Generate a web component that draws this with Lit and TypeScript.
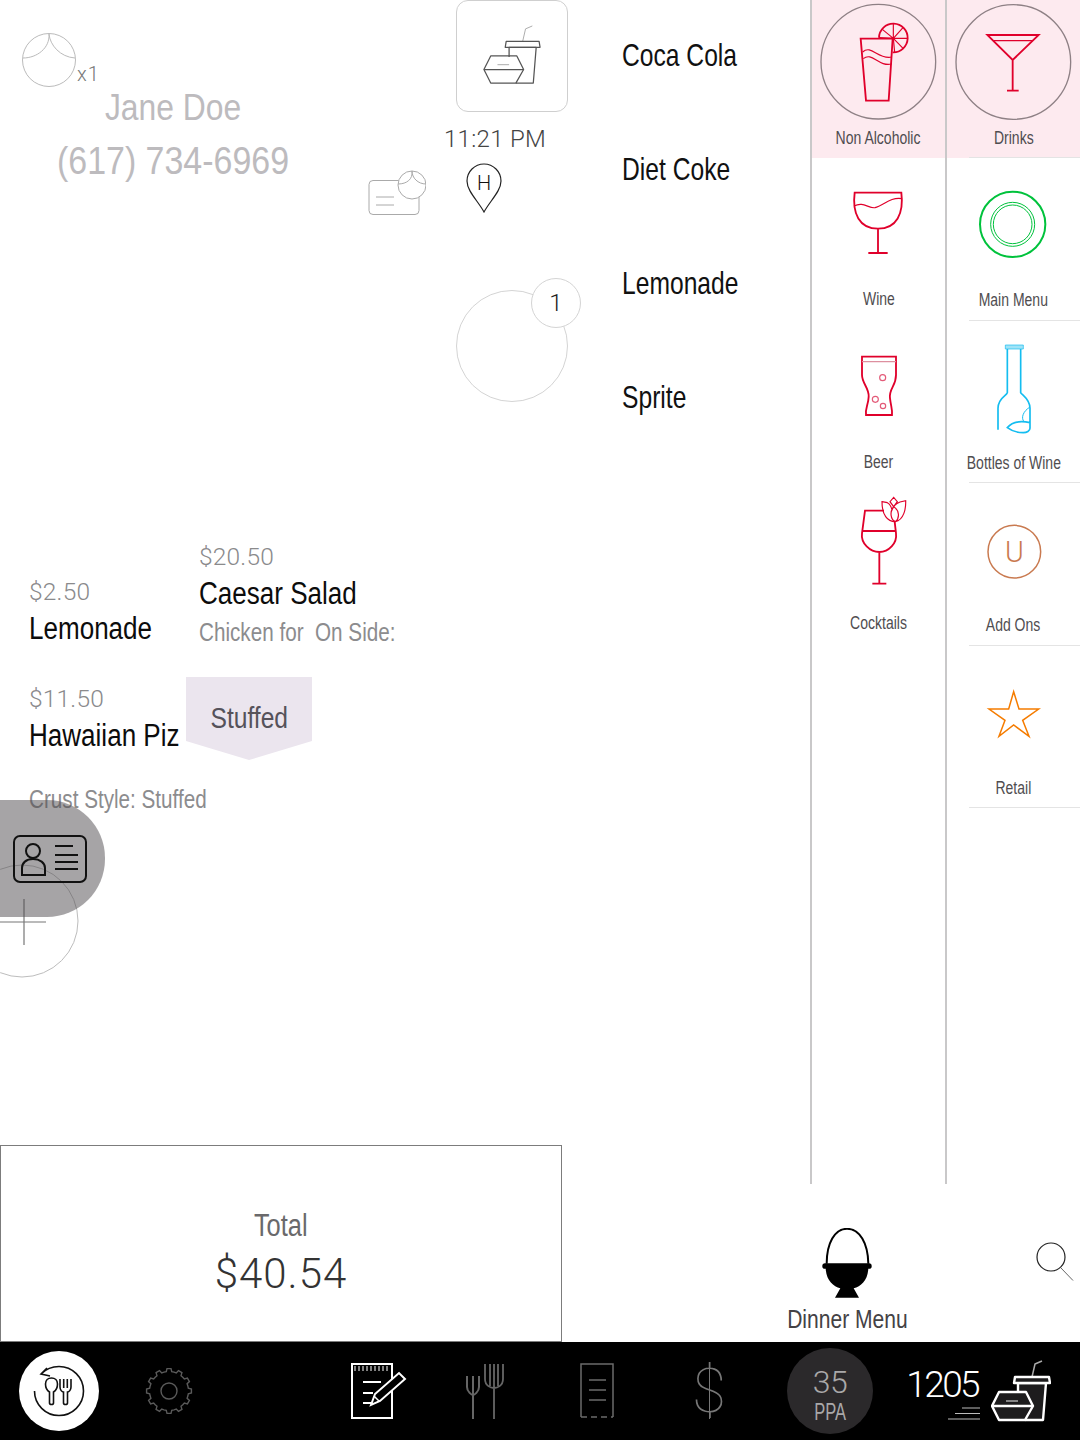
import { LitElement, html, css, svg } from "lit";
import { customElement } from "lit/decorators.js";

const gearPath = () => {
  const cx = 24, cy = 24, teeth = 12;
  let d = "";
  for (let i = 0; i < teeth; i++) {
    const a = (i / teeth) * Math.PI * 2;
    const s = (Math.PI * 2) / teeth;
    const pts: [number, number][] = [
      [19.5, a - s * 0.5], [19.5, a - s * 0.27], [22.5, a - s * 0.17], [22.5, a + s * 0.17], [19.5, a + s * 0.27],
    ];
    pts.forEach(([r, t], j) => {
      d += `${i === 0 && j === 0 ? "M" : "L"}${(cx + r * Math.cos(t)).toFixed(2)} ${(cy + r * Math.sin(t)).toFixed(2)}`;
    });
  }
  return d + "Z";
};

const takeout = (cls: string) => html`<svg class=${cls} viewBox="0 0 60 62" fill="none" stroke-linejoin="round">
  <path class="straw" d="M41 17 L44 4 L51 1"/>
  <path class="body" d="M27 33 V23 H55 L52 60 H34"/>
  <path class="body" d="M24 17 H58 L59 23 H23 Z"/>
  <path class="body" d="M1 46 L8 32 H35 L42 46 L34 60 H8 Z"/>
  <path class="body" d="M1 46 H42"/>
  <path class="straw" d="M15 41 H27"/>
</svg>`;

const icons: Record<string, unknown> = {
  alcohol: svg`<circle cx="205" cy="185" r="172" class="ring"/>
    <path class="r" d="M207 113 A43 43 0 1 1 248 157"/>
    <path class="r2" d="M250 115 L207 113 M250 115 L217 88 M250 115 L250 72 M250 115 L279 83 M250 115 L293 115 M250 115 L280 146 M250 115 L254 157"/>
    <path class="r" d="M152 116 H248 L236 302 H168 Z"/>
    <path class="r2" d="M158 156 C184 132 204 180 245 171 M160 176 C186 154 206 202 245 192"/>`,
  drinks: svg`<circle cx="610" cy="186" r="172" class="ring"/>
    <path class="r" d="M532 105 H686 L608 180 Z M608 180 V272 M591 272 H626"/>
    <path class="r2" d="M552 122 H668"/>`,
  wine: svg`<path class="r" d="M134 578 H274 C282 640 260 686 204 686 C148 686 126 640 134 578 Z M204 686 V759 M175 759 H233"/>
    <path class="r2" d="M132 618 C160 603 175 626 195 623 C220 618 240 590 276 596"/>`,
  plate: svg`<g fill="none" stroke="#00c23c"><circle cx="608" cy="673" r="98" stroke-width="6"/>
    <circle cx="608" cy="673" r="66" stroke-width="3"/><circle cx="608" cy="673" r="58" stroke-width="3"/></g>`,
  beer: svg`<path class="r" d="M156 110 H258 V165 C258 200 236 205 240 235 C243 260 248 270 246 285 H168 C165 265 175 255 176 230 C178 205 156 190 156 165 Z"/>
    <path d="M156 125 H258" stroke="#dd8f9f" stroke-width="3.5" fill="none"/>
    <g fill="none" stroke="#e35a78" stroke-width="3.5"><circle cx="218" cy="173" r="9"/><circle cx="196" cy="238" r="9"/><circle cx="219" cy="258" r="8"/></g>`,
  bottle: svg`<g fill="none" stroke="#14bdf0" stroke-width="5"><path d="M586 72 H640 V84 H586 Z" fill="#9fe3f7" stroke-width="2"/>
    <path d="M592 84 V215 C590 225 564 230 564 262 V326"/>
    <path d="M632 84 V215 C640 225 660 235 660 262 V322 C660 330 650 335 640 335 C620 335 605 330 592 320 C605 305 630 298 660 305"/>
    <path stroke-width="3" d="M660 258 C640 270 632 290 642 302"/></g>`,
  cocktail: svg`<path class="r" d="M222 572 H165 L156 640 C152 670 180 696 208 696 C236 696 262 670 258 640 L254 605 M156 633 H258 M208 696 V791 M187 791 H229"/>
    <path class="r2" d="M216 545 L232 548 C240 552 244 560 246 570 C252 556 256 552 270 546 L287 542 C288 565 282 600 256 605 C232 605 216 585 216 545 Z M251 532 L262 545 L251 560 L240 545 Z M251 560 C238 575 242 600 256 605 C270 595 268 570 251 560"/>`,
  addon: svg`<circle cx="613" cy="692" r="79" fill="none" stroke="#c97a50" stroke-width="4.5"/>
    <text x="613" y="722" text-anchor="middle" class="u">U</text>`,
  star: svg`<path fill="none" stroke="#f57c00" stroke-width="4.5" d="M611 152 L627 204 H686 L638 238 L657 286 L611 252 L567 286 L585 238 L537 204 H596 Z"/>`,
};

type Cell = { label: string; icon: string; y0: number; svgH: number; h: number; };
const col1: Cell[] = [
  { label: "Non Alcoholic", icon: "alcohol", y0: 0, svgH: 128, h: 158 },
  { label: "Wine", icon: "wine", y0: 474, svgH: 131, h: 162 },
  { label: "Beer", icon: "beer", y0: 0, svgH: 131.5, h: 162 },
  { label: "Cocktails", icon: "cocktail", y0: 486, svgH: 131, h: 162 },
];
const col2: Cell[] = [
  { label: "Drinks", icon: "drinks", y0: 0, svgH: 128, h: 158 },
  { label: "Main Menu", icon: "plate", y0: 474, svgH: 132, h: 162.5 },
  { label: "Bottles of Wine", icon: "bottle", y0: 0, svgH: 132.5, h: 162 },
  { label: "Add Ons", icon: "addon", y0: 486, svgH: 132.5, h: 163 },
  { label: "Retail", icon: "star", y0: 15, svgH: 132.5, h: 162 },
];

@customElement("app-root")
export class AppRoot extends LitElement {
  static styles = css`
    :host { display: block; width: 1080px; height: 1440px; background: #fff; overflow: hidden;
      font-family: "Liberation Sans", Arial, sans-serif; color: #111; }
    .screen { display: grid; width: 1080px; height: 1440px;
      grid-template-columns: 562px 248px 135px 135px; grid-template-rows: 1145px 39px 158px 98px; }

    .left { grid-column: 1 / 3; grid-row: 1; position: relative; overflow: hidden; }
    .top { display: flex; height: 532px; }
    .customer { width: 456px; padding-top: 33px; box-sizing: border-box; display: flex; flex-direction: column; }
    .avatarRow { display: flex; align-items: flex-end; padding-left: 22px; height: 54px; }
    .avatar { width: 54px; height: 54px; display: block; }
    .x1 { font: 300 20px/20px Roboto, sans-serif; color: #777; letter-spacing: 1px; margin: 0 0 3px 1px; }
    .name, .phone { width: 346px; text-align: center; color: #bdbbbe; line-height: 44px; }
    .name { margin-top: -1px; font-size: 37px; transform: scaleX(.86); }
    .phone { margin-top: 9px; font-size: 39px; transform: scaleX(.87); }
    .card { width: 60px; height: 46px; margin: -13px 0 0 366px; display: block; }

    .center { width: 112px; }
    .box { width: 112px; height: 112px; box-sizing: border-box; border: 1.5px solid #cfcfcf; border-radius: 12px;
      display: flex; align-items: flex-start; padding: 24px 0 0 25px; }
    .smallTake { width: 60px; height: 60px; display: block; }
    .smallTake .body { stroke: #555; stroke-width: 1.3; }
    .smallTake .straw { stroke: #aaa; stroke-width: 1; }
    .time { font: 300 24px/28px Roboto, sans-serif; color: #444; white-space: nowrap; margin: 13px 0 0 -12px; letter-spacing: .3px; }
    .pin { position: relative; width: 36px; height: 50px; margin: 10px 0 0 10px; font: 300 20px/40px Roboto, sans-serif; text-align: center; color: #111; }
    .pin svg { position: absolute; inset: 0; width: 36px; height: 50px; }
    .seat { position: relative; width: 112px; height: 112px; margin-top: 77px; border: 1px solid #d4d4d4; border-radius: 50%; box-sizing: border-box; }
    .badge { position: absolute; left: 74px; top: -13px; width: 50px; height: 50px; box-sizing: border-box; border: 1px solid #d4d4d4; border-radius: 50%; background: #fff;
      display: flex; align-items: center; justify-content: center; font: 300 24px Roboto, sans-serif; color: #222; }

    .list { margin: -2px 0 0 54px; font-size: 32px; color: #111; }
    .list div { height: 114px; line-height: 114px; transform: scaleX(.77); transform-origin: left center; white-space: nowrap; }

    .tickets { display: flex; padding-left: 29px; }
    .price { font: 300 24.5px/30px Roboto, sans-serif; color: #8a8a8c; letter-spacing: 0.2px; }
    .item { font-size: 31px; line-height: 40px; margin-top: 2px; color: #0c0c0c; white-space: nowrap; transform: scaleX(.84); transform-origin: left center; }
    .mod { font-size: 26px; line-height: 32px; color: #8c8c8e; white-space: pre; transform: scaleX(.795); transform-origin: left center; }
    .t1 { width: 170px; margin-top: 45px; }
    .t3 { padding: 0 0 0 29px; }
    .t2 { margin-top: 10px; }
    .t2 .mod { margin-top: 2px; }
    .t3 .price { margin-top: 35px; }
    .t3 .mod { margin-top: 27px; }

    .popup { position: absolute; left: 186px; top: 677px; width: 126px; height: 83px; background: #ebe5ee; color: #55525a;
      clip-path: polygon(0 0, 100% 0, 100% 77%, 50% 100%, 0 77%); font-size: 30px; line-height: 82px; display: flex; justify-content: center; }
    .popup span { transform: scaleX(.82); white-space: nowrap; }
    .pill { position: absolute; left: 0; top: 800px; width: 105px; height: 117px; background: rgba(77, 74, 77, .5); border-radius: 0 58px 58px 0;
      display: flex; align-items: center; padding-left: 13px; box-sizing: border-box; }
    .pill svg { width: 74px; height: 48px; display: block; margin-top: 1px; }
    .fab { position: absolute; left: 0; top: 862px; width: 82px; height: 118px; display: block; }

    .menu { grid-row: 1 / 3; border-left: 2px solid #c9c8c9; box-sizing: border-box; overflow: hidden; }
    .menu.m1 { grid-column: 3; }
    .menu.m2 { grid-column: 4; }
    .cell { display: flex; flex-direction: column; align-items: center; box-sizing: border-box; position: relative; }
    .cell.on { background: #fdeaef; }
    .cell svg { display: block; width: 134px; flex: none; }
    .cell .r { fill: none; stroke: #e0002b; stroke-width: 5.5; }
    .cell .r2 { fill: none; stroke: #e0002b; stroke-width: 3.5; }
    .cell .ring { fill: none; stroke: #8e8085; stroke-width: 4; }
    .cell .u { font: 300 86px Roboto, sans-serif; fill: #c97a50; }
    .label { font-size: 17.5px; line-height: 20px; color: #4f4d50; white-space: nowrap; transform: scaleX(.8); }
    .m2 .cell::after { content: ""; position: absolute; right: 0; bottom: 0; width: 111px; height: 1px; background: #e4e4e4; }

    .total { grid-column: 1; grid-row: 2 / 4; border: 1px solid #7c7c7c; box-sizing: border-box; display: flex; flex-direction: column; align-items: center; padding-top: 61px; }
    .total .lab { font-size: 31px; line-height: 38px; color: #6a696b; transform: scaleX(.82); }
    .total .amt { font: 300 42px/54px Roboto, sans-serif; color: #333; letter-spacing: 1px; margin-top: 2px; }

    .dock { grid-column: 2 / 5; grid-row: 3; display: flex; align-items: flex-start; }
    .dinner { margin: 44px 0 0 225px; width: 120px; display: flex; flex-direction: column; align-items: center; }
    .dinner svg { width: 50px; height: 72px; display: block; }
    .dinner span { font-size: 26px; line-height: 34px; color: #444245; white-space: nowrap; margin-top: 2px; transform: scaleX(.81); }
    .search { width: 40px; height: 40px; display: block; margin: 58px 0 0 129px; }

    .bar { grid-column: 1 / 5; grid-row: 4; background: #000; display: grid; align-items: center; justify-items: center;
      grid-template-columns: 118px 102px 107px 100px 116px 108px 116px 126px 1fr; }
    .reload { width: 80px; height: 80px; border-radius: 50%; background: #fff; display: block; }
    .gear { width: 48px; height: 48px; display: block; }
    .note { width: 56px; height: 58px; display: block; margin-left: 4px; }
    .forks { width: 40px; height: 58px; display: block; margin-right: 2px; }
    .receipt { width: 36px; height: 58px; display: block; }
    .dollar { position: relative; font: 100 62px/62px Roboto, sans-serif; color: #777; }
    .dollar::after { content: ""; position: absolute; left: 50%; top: 5px; bottom: 3px; width: 1px; background: #777; }
    .ppa { width: 86px; height: 86px; border-radius: 50%; background: #2b292b; display: flex; flex-direction: column; align-items: center; justify-content: center; color: #a9a8a9; padding-top: 6px; box-sizing: border-box; }
    .ppa b { font: 300 32px/36px Roboto, sans-serif; letter-spacing: -0.5px; }
    .ppa i { font-style: normal; font-size: 23px; line-height: 24px; transform: scaleX(.72); }
    .orders { justify-self: start; display: flex; align-items: flex-start; padding-left: 14px; }
    .count { display: flex; flex-direction: column; align-items: flex-end; width: 73px; }
    .count b { font: 300 37px/38px Roboto, sans-serif; color: #fff; letter-spacing: -2.6px; margin: 5px 2px 0 0; }
    .speed { width: 32px; height: 14px; display: block; margin-top: 3px; }
    .bigTake { width: 60px; height: 62px; display: block; margin: -1px 0 0 11px; }
    .bigTake .body { stroke: #fff; stroke-width: 2.4; fill: #1d1c1d; }
    .bigTake .straw { stroke: #aaa; stroke-width: 1.5; }
  `;

  private cell(c: Cell, x0: number, on: boolean) {
    return html`<div class="cell ${on ? "on" : ""}" style="height:${c.h}px">
      <svg viewBox="${x0} ${c.y0} 402 ${c.svgH * 3}" style="height:${c.svgH}px">${icons[c.icon]}</svg>
      <div class="label">${c.label}</div>
    </div>`;
  }

  render() {
    return html`<div class="screen">
      <section class="left">
        <div class="top">
          <div class="customer">
            <div class="avatarRow">
              <svg class="avatar" viewBox="0 0 54 54" fill="none" stroke="#bbb"><circle cx="27" cy="27" r="26.5"/><path d="M27 1 C28 15 15 25 1 25 M27 1 C28 12 38 24 53 25"/></svg>
              <span class="x1">x1</span>
            </div>
            <div class="name">Jane Doe</div>
            <div class="phone">(617) 734-6969</div>
            <svg class="card" viewBox="0 0 60 46" fill="none" stroke="#aaa">
              <rect x="3" y="10.5" width="50" height="34" rx="4"/>
              <path d="M10 27 H28 M10 35 H28"/>
              <circle cx="46" cy="15" r="14" fill="#fff"/>
              <path d="M46 1 C47 9 41 14 32 14 M46 1 C46 8 52 14 60 14"/>
            </svg>
          </div>
          <div class="center">
            <div class="box">${takeout("smallTake")}</div>
            <div class="time">11:21 PM</div>
            <div class="pin">
              <svg viewBox="0 0 36 50" fill="none" stroke="#222" stroke-width="1.2"><path d="M18 49 C12 38 1 28 1 18 A17 17 0 0 1 35 18 C35 28 24 38 18 49 Z"/></svg>
              H
            </div>
            <div class="seat"><div class="badge">1</div></div>
          </div>
          <div class="list"><div>Coca Cola</div><div>Diet Coke</div><div>Lemonade</div><div>Sprite</div></div>
        </div>
        <div class="tickets">
          <div class="t1"><div class="price">$2.50</div><div class="item">Lemonade</div></div>
          <div class="t2"><div class="price">$20.50</div><div class="item">Caesar Salad</div><div class="mod">Chicken for  On Side:</div></div>
        </div>
        <div class="t3"><div class="price">$11.50</div><div class="item">Hawaiian Piz</div><div class="mod">Crust Style: Stuffed</div></div>

        <div class="popup"><span>Stuffed</span></div>
        <svg class="fab" viewBox="0 0 82 118" fill="none">
          <circle cx="22" cy="59" r="56" stroke="#bdbdbd"/>
          <path d="M24 37 V83 M0 60 H46" stroke="#777" stroke-width="1.2"/>
        </svg>
        <div class="pill">
          <svg viewBox="0 0 74 48" fill="none" stroke="#111" stroke-width="2">
            <rect x="1" y="1" width="72" height="46" rx="6"/>
            <circle cx="20" cy="16" r="7"/>
            <path d="M9 40 V33 C9 28 13 24 20 24 C27 24 32 28 32 33 V40 Z"/>
            <path d="M42 11 H60 M42 20 H65 M42 27 H65 M42 34 H65"/>
          </svg>
        </div>
      </section>

      <aside class="menu m1">${col1.map((c, i) => this.cell(c, 6, i === 0))}</aside>
      <aside class="menu m2">${col2.map((c, i) => this.cell(c, 411, i === 0))}</aside>

      <div class="total"><div class="lab">Total</div><div class="amt">$40.54</div></div>

      <div class="dock">
        <div class="dinner">
          <svg viewBox="157 145 150 215">
            <path d="M171 252 C171 190 195 147 232 147 C270 147 295 190 296 252" fill="none" stroke="#000" stroke-width="6"/>
            <rect x="158" y="250" width="148" height="17" rx="8" fill="#000"/>
            <path d="M168 262 C168 300 190 320 212 325 L196 354 H268 L252 325 C275 320 296 300 296 262 Z" fill="#000"/>
          </svg>
          <span>Dinner Menu</span>
        </div>
        <svg class="search" viewBox="0 0 40 40" fill="none">
          <circle cx="15" cy="15" r="14" stroke="#222" stroke-width="1.2"/>
          <path d="M25 26 L37 38.5" stroke="#666"/>
        </svg>
      </div>

      <nav class="bar">
        <svg class="reload" viewBox="0 0 80 80" fill="none" stroke="#111" stroke-width="1.6">
          <path d="M28 17 L22 23 L31 25 M22 23 C27 18 33 15.500 40 15.500 A24.500 24.500 0 1 1 15.500 40"/>
          <path d="M30.500 52 V41 C27 39 26.500 36 26.500 33 C26.500 29.500 29 27 32.500 27 C36 27 38.500 29.500 38.500 33 C38.500 36 38 39 34.500 41 V52 C34.500 54 30.500 54 30.500 52 Z"/>
          <path d="M41 28 V36 C41 39 43 41 44.500 41 V52 C44.500 54 48.500 54 48.500 52 V41 C50 41 52 39 52 36 V28 M44.700 28 V37 M48.300 28 V37"/>
        </svg>
        <svg class="gear" viewBox="0 0 48 48" fill="none" stroke="#5a5a5a" stroke-width="1.4">
          <path d=${gearPath()}/><circle cx="24" cy="24" r="8"/>
        </svg>
        <div></div>
        <svg class="note" viewBox="0 0 56 58" fill="none" stroke="#fff">
          <rect x="1" y="2" width="40" height="54" stroke-width="2"/>
          <path d="M4 4 V9 M8 4 V9 M12 4 V9 M16 4 V9 M20 4 V9 M24 4 V9 M28 4 V9 M32 4 V9 M36 4 V9" stroke-width="1"/>
          <path d="M12 20 H30 M12 31 H22 M12 41 H20" stroke-width="2"/>
          <path d="M20 43 L24 32 L48 11 L54 17 L29 39 Z" fill="#000" stroke-width="2"/>
          <path d="M23 34 L28 39" stroke-width="1.500"/>
        </svg>
        <svg class="forks" viewBox="0 0 40 58" fill="none" stroke="#666" stroke-width="2">
          <path d="M3 14 V25 C3 30 8 33 9 33 V57 M15 14 V25 C15 30 10 33 9 33 M9 14 V33"/>
          <path d="M21 2 V17 C21 24 27 26 30 26 C33 26 39 24 39 17 V2 M30 2 V57 M26 2 V24 M34 2 V24" stroke-width="1.8"/>
        </svg>
        <svg class="receipt" viewBox="0 0 36 58" fill="none" stroke="#6b6b6b" stroke-width="1.500">
          <path d="M2 55 V2 H34 V55"/><path d="M2 55 H34" stroke-dasharray="6 4"/>
          <path d="M10 18 H27 M10 28 H27 M10 38 H27"/>
        </svg>
        <div class="dollar">$</div>
        <div class="ppa"><b>35</b><i>PPA</i></div>
        <div class="orders">
          <div class="count"><b>1205</b>
            <svg class="speed" viewBox="0 0 32 14" stroke="#bbb" stroke-width="1.200"><path d="M14 1 H32 M7 6.500 H32 M0 12 H32"/></svg>
          </div>
          ${takeout("bigTake")}
        </div>
      </nav>
    </div>`;
  }
}
